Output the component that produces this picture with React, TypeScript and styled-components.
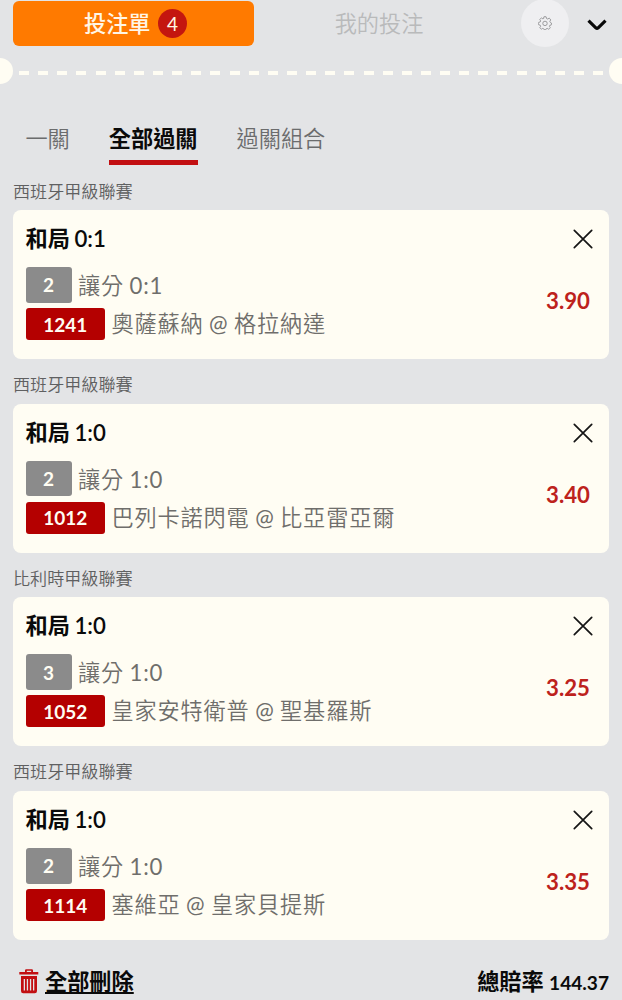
import React from 'react';
import styled, { createGlobalStyle } from 'styled-components';

const GlobalStyle = createGlobalStyle`
  *, *::before, *::after { box-sizing: border-box; }
  body {
    margin: 0;
    background: #e3e4e6;
    font-family: Lato, "Noto Sans CJK TC", sans-serif;
    color: #0a0a0a;
  }
  button { font: inherit; border: 0; padding: 0; background: none; color: inherit; }
`;

const Page = styled.main`
  width: 622px;
  height: 1000px;
  overflow: hidden;
  background: #e3e4e6;
`;

const Header = styled.header`
  display: flex;
  height: 48px;
  padding: 1px 13px 0;
`;

const SlipButton = styled.button`
  display: flex;
  align-items: center;
  justify-content: center;
  gap: 7.5px;
  width: 241px;
  height: 44.5px;
  padding: 1px 0 0 4px;
  border-radius: 6px;
  background: #ff7a00;
  color: #fff6e6;
  font-size: 22.2px;
  font-weight: 500;
  line-height: 44px;
`;

const Count = styled.span`
  width: 29px;
  height: 29px;
  border-radius: 50%;
  background: #c4160f;
  font-size: 19px;
  font-weight: 400;
  line-height: 30px;
  text-align: center;
`;

const MyBets = styled.button`
  width: 250px;
  height: 45px;
  color: #b9babb;
  font-size: 22.2px;
  font-weight: 350;
  line-height: 44px;
`;

const SettingsButton = styled.button`
  display: grid;
  place-items: center;
  flex: none;
  width: 48px;
  height: 48px;
  margin: -2px 0 0 17px;
  border-radius: 50%;
  background: #efeff1;
`;

const CollapseButton = styled.button`
  display: block;
  width: 20px;
  height: 12px;
  margin: 17.5px 0 0 18.3px;
  svg { display: block; }
`;

const Perforation = styled.div`
  display: flex;
  align-items: center;
  justify-content: space-between;
  height: 26px;
  margin-top: 10px;
`;

const Notch = styled.i<{ $side: 'left' | 'right' }>`
  width: 13px;
  height: 26px;
  background: #fffdf3;
  border-radius: ${({ $side }) => ($side === 'left' ? '0 13px 13px 0' : '13px 0 0 13px')};
`;

const Dashes = styled.i`
  width: 585px;
  height: 4px;
  margin-top: 3px;
  background: repeating-linear-gradient(90deg, #fffdf3 0 10px, transparent 10px 19.14px);
`;

const Tabs = styled.nav`
  display: flex;
  gap: 39px;
  height: 81.5px;
  padding: 37px 0 0 25.4px;
`;

const Tab = styled.button<{ $active?: boolean }>`
  display: flex;
  height: 44.4px;
  font-size: 22.2px;
  line-height: 31px;
  padding-top: 2px;
  white-space: nowrap;
  color: ${({ $active }) => ($active ? '#0a0a0a' : '#6b6c6d')};
  font-weight: ${({ $active }) => ($active ? 700 : 350)};
  border-bottom: 5px solid ${({ $active }) => ($active ? '#c20f12' : 'transparent')};
`;

const League = styled.h2`
  margin: 0;
  height: 44.65px;
  padding: 13px 13px 0;
  font-size: 17.1px;
  font-weight: 350;
  line-height: 26px;
  color: #5f6061;
`;

const Card = styled.article`
  display: flex;
  justify-content: space-between;
  height: 149px;
  margin: 0 13px;
  padding: 13px 13px 0 12.6px;
  border-radius: 8px;
  background: #fffdf3;
`;

const Title = styled.h3`
  margin: 0 0 12px;
  height: 32px;
  font-size: 22.2px;
  font-weight: 600;
  line-height: 32px;
  word-spacing: -1px;
`;

const Line = styled.div<{ $height: number; $leading: number }>`
  display: flex;
  gap: 6.3px;
  height: ${({ $height }) => $height}px;
  margin-bottom: 5.5px;
  font-family: Lato, "Noto Sans CJK TC DemiLight", "Noto Sans CJK TC", sans-serif;
  font-size: 22.2px;
  font-weight: 400;
  line-height: ${({ $leading }) => $leading}px;
  letter-spacing: 0.85px;
  word-spacing: -1px;
  color: #6f6e6b;
  white-space: pre;
`;

const Tag = styled.span<{ $tone: 'grey' | 'red' }>`
  display: grid;
  place-items: center;
  height: 100%;
  width: ${({ $tone }) => ($tone === 'grey' ? 46 : 79.5)}px;
  border-radius: 3px;
  background: ${({ $tone }) => ($tone === 'grey' ? '#8b8b8b' : '#b40000')};
  color: #fffdf3;
  font-size: 19px;
  font-weight: 700;
  line-height: 30px;
  padding-top: 1px;
  letter-spacing: 0;
`;

const Side = styled.div`
  display: flex;
  flex-direction: column;
  align-items: flex-end;
`;

const RemoveButton = styled.button`
  width: 20px;
  height: 20px;
  margin: 6px 3px 32px 0;
  svg { display: block; }
`;

const Odds = styled.strong`
  margin-right: 6px;
  font-size: 22.2px;
  font-weight: 700;
  line-height: 40px;
  color: #bd221c;
`;

const Footer = styled.footer`
  display: flex;
  justify-content: space-between;
  height: 60px;
  padding: 25.3px 13px 0 19px;
  font-size: 22.2px;
  font-weight: 700;
  line-height: 33px;
`;

const ClearButton = styled.button`
  display: flex;
  gap: 6px;
  svg { margin-top: 4px; }
`;

const Underlined = styled.span`
  text-decoration: underline;
  text-decoration-thickness: 2px;
  text-underline-offset: 2px;
  text-decoration-skip-ink: none;
`;

const TotalValue = styled.span`
  font-size: 19.1px;
`;

const bets = [
  { league: '西班牙甲級聯賽', title: '和局 0:1', min: '2', handicap: '讓分 0:1', id: '1241', match: '奧薩蘇納 @ 格拉納達', odds: '3.90' },
  { league: '西班牙甲級聯賽', title: '和局 1:0', min: '2', handicap: '讓分 1:0', id: '1012', match: '巴列卡諾閃電 @ 比亞雷亞爾', odds: '3.40' },
  { league: '比利時甲級聯賽', title: '和局 1:0', min: '3', handicap: '讓分 1:0', id: '1052', match: '皇家安特衛普 @ 聖基羅斯', odds: '3.25' },
  { league: '西班牙甲級聯賽', title: '和局 1:0', min: '2', handicap: '讓分 1:0', id: '1114', match: '塞維亞 @ 皇家貝提斯', odds: '3.35' },
];

const GearIcon = () => (
  <svg width="14" height="14" viewBox="0 0 24 24" fill="none" stroke="#969698" strokeWidth="1.6" strokeLinejoin="round">
    <path d="M10 1.5Q12 .5 14 1.5L14.6 4.4 16.7 5.2 19.2 3.7Q21 4.7 21.8 6.8L20.2 9.2 21 10.9 23 12Q23.4 14 22.5 15.6L20.2 16 19.6 17.6 21 20Q20 22 18 22.6L15.8 21.2 14 22 13.4 23.4H10.5L9.9 22 8.1 21.2 5.9 22.5Q3.8 21.7 3.2 19.7L4.6 17.6 3.8 15.8 1.2 15.1Q.4 13 1.2 10.9L3.8 10.2 4.6 8.4 3.1 6.1Q4 4 6 3.4L8.4 4.9 9.8 4.2z" />
    <circle cx="12" cy="12.7" r="3.8" />
  </svg>
);

const TrashIcon = () => (
  <svg width="20" height="25" viewBox="0 0 20 25">
    <path fill="#c20f12" fillRule="evenodd" d="M6 3V1.4Q6 .3 7.2.3h5.6q1.2 0 1.2 1.1V3h5.3v2.6H.3V3zm1.8 0h4.4V1.8H7.8zM2 7h16v15q0 2.2-2.2 2.2H4.2Q2 24.2 2 22zm2.7 3v11.5H6V10zm3.1 0v11.5h1.3V10zm3.1 0v11.5h1.3V10zm3.1 0v11.5h1.3V10z" />
  </svg>
);

export default function App() {
  return (
    <>
      <GlobalStyle />
      <Page>
        <Header>
          <SlipButton>投注單<Count>4</Count></SlipButton>
          <MyBets>我的投注</MyBets>
          <SettingsButton aria-label="設定"><GearIcon /></SettingsButton>
          <CollapseButton aria-label="收合">
            <svg width="20" height="12" viewBox="0 0 20 12" fill="none" stroke="#080808" strokeWidth="3.2">
              <path d="M1.5 1.7 8.8 8.8Q10 9.8 11.2 8.8L18.5 1.7" />
            </svg>
          </CollapseButton>
        </Header>
        <Perforation>
          <Notch $side="left" />
          <Dashes />
          <Notch $side="right" />
        </Perforation>
        <Tabs>
          <Tab>一關</Tab>
          <Tab $active>全部過關</Tab>
          <Tab>過關組合</Tab>
        </Tabs>
        {bets.map((bet) => (
          <section key={bet.id}>
            <League>{bet.league}</League>
            <Card>
              <div>
                <Title>{bet.title}</Title>
                <Line $height={35.5} $leading={37}><Tag $tone="grey">{bet.min}</Tag>{bet.handicap}</Line>
                <Line $height={32} $leading={32.5}><Tag $tone="red">{bet.id}</Tag>{bet.match}</Line>
              </div>
              <Side>
                <RemoveButton aria-label="移除">
                  <svg width="20" height="20" viewBox="0 0 20 20" fill="none" stroke="#151515" strokeWidth="1.7" strokeLinecap="round">
                    <path d="m1.3 1.3 17.4 17.4m0-17.4L1.3 18.7" />
                  </svg>
                </RemoveButton>
                <Odds>{bet.odds}</Odds>
              </Side>
            </Card>
          </section>
        ))}
        <Footer>
          <ClearButton><TrashIcon /><Underlined>全部刪除</Underlined></ClearButton>
          <span>總賠率 <TotalValue>144.37</TotalValue></span>
        </Footer>
      </Page>
    </>
  );
}
